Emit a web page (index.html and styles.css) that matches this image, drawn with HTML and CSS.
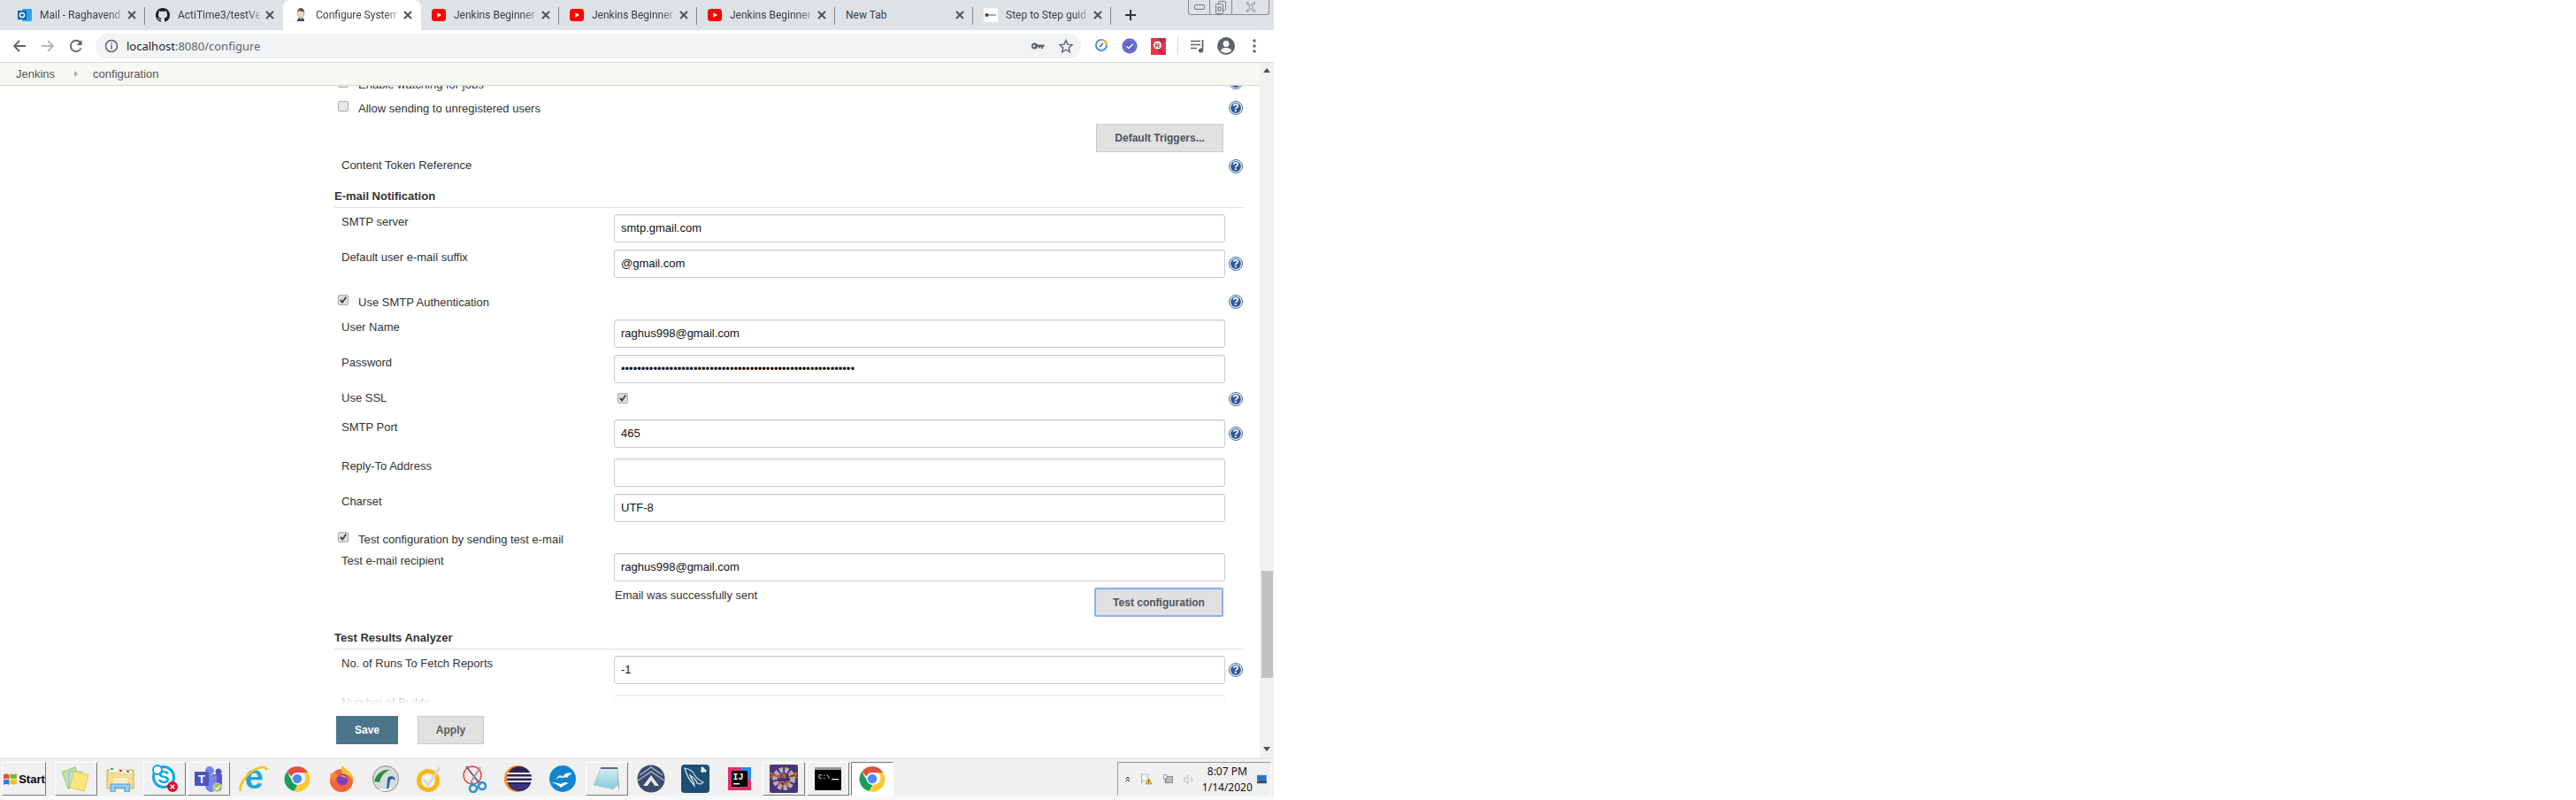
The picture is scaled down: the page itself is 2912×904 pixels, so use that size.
FILE: index.html
```html
<!DOCTYPE html>
<html lang="en">
<head>
  <meta charset="UTF-8" />
  <title>Configure System [Jenkins]</title>
  <link rel="stylesheet" href="styles.css">
</head>
<body>

  <svg class="defs" width="0" height="0">
    <defs>
      <linearGradient id="pad" x1="0" y1="0" x2="0" y2="1">
        <stop offset="0" stop-color="#d8eef3" />
        <stop offset="1" stop-color="#7cc6d6" />
      </linearGradient>
    </defs>
    <symbol id="help" viewBox="0 0 16 16">
      <circle cx="8" cy="8" r="7.500" fill="#fff" stroke="#3a68a8" />
      <circle cx="8" cy="8" r="5.900" fill="#2f5a96" />
      <text x="8" y="12.200" text-anchor="middle" font-family="Liberation Sans" font-weight="700" font-size="12" fill="#fff">?</text>
    </symbol>
    <symbol id="yt" viewBox="0 0 16 16">
      <rect x="0" y="1" width="16" height="14" rx="3.500" fill="#f00" />
      <path d="M6.300 5.300v5.400L11 8z" fill="#fff" />
    </symbol>
    <symbol id="close" viewBox="0 0 16 16">
      <path d="M4 4l8 8M12 4l-8 8" stroke="#4a4d52" stroke-width="1.800" fill="none" />
    </symbol>
    <symbol id="chrome" viewBox="0 0 32 32">
      <path d="M16 1a15 15 0 0 1 13 7.500H16a7.500 7.500 0 0 0-7 4.800L3.500 7.500A15 15 0 0 1 16 1z" fill="#dd5044" />
      <path d="M3.500 7.500L9.800 18.500a7.500 7.500 0 0 0 6.800 4.900L12 31A15 15 0 0 1 3.500 7.500z" fill="#1b9e58" />
      <path d="M29 8.500A15 15 0 0 1 12 31l6.500-8.500a7.500 7.500 0 0 0 3.800-14z" fill="#fdc931" />
      <circle cx="16" cy="16" r="6.900" fill="#fff" />
      <circle cx="16" cy="16" r="5.600" fill="#4d8cf5" />
    </symbol>
  </svg>

  <div class="tabstrip">
    <div class="tab sep">
      <svg class="favicon" viewBox="0 0 16 16"><rect x="5" y="1" width="11" height="14" rx="1" fill="#28a8ea" /><rect x="0" y="3" width="10" height="10" fill="#0a5fb4" /><circle cx="5" cy="8" r="2.600" fill="none" stroke="#fff" stroke-width="1.500" /></svg>
      <span class="tab-title">Mail - Raghavend</span>
      <svg class="tab-close"><use href="#close" /></svg>
    </div>
    <div class="tab">
      <svg class="favicon" viewBox="0 0 16 16"><path fill="#1b1f23" d="M8 0C3.580 0 0 3.580 0 8c0 3.540 2.290 6.530 5.470 7.590.4.070.55-.17.55-.38 0-.19-.01-.82-.01-1.490-2.010.37-2.530-.49-2.690-.94-.09-.23-.48-.94-.82-1.130-.28-.15-.68-.52-.01-.53.63-.01 1.080.58 1.230.82.720 1.210 1.870.87 2.330.66.070-.52.280-.87.510-1.070-1.780-.2-3.640-.89-3.640-3.950 0-.87.310-1.590.820-2.150-.08-.2-.36-1.020.08-2.120 0 0 .67-.21 2.200.82.640-.18 1.320-.27 2-.27s1.360.09 2 .27c1.530-1.040 2.200-.82 2.200-.82.440 1.100.16 1.920.08 2.120.51.560.82 1.270.82 2.150 0 3.070-1.870 3.750-3.650 3.950.29.250.54.730.54 1.480 0 1.070-.01 1.930-.01 2.200 0 .21.150.46.550.38A8.010 8.010 0 0 0 16 8c0-4.420-3.580-8-8-8z" /></svg>
      <span class="tab-title">ActiTime3/testVe</span>
      <svg class="tab-close"><use href="#close" /></svg>
    </div>
    <div class="tab active">
      <svg class="favicon" viewBox="0 0 16 16">
        <path d="M4 15c0-3 1-4 4-4s4 1 4 4z" fill="#3d4a5c" />
        <path d="M6.500 11l1.500 2 1.500-2z" fill="#fff" />
        <path d="M7.200 12.200h1.600l-.8 1z" fill="#c03a30" />
        <path d="M4.500 5c0-3 1.500-4.500 3.700-4.500S12 2.500 11.800 6c-.2 3-1.500 5.200-3.600 5.200C6 11.200 4.500 8.500 4.500 5z" fill="#f0d6b7" stroke="#7a5c46" stroke-width=".5" />
        <path d="M4.500 5C4 2 6 .3 8.200.3S12 2 11.800 4.500C10 4 7 3.500 6 3z" fill="#5c5149" />
      </svg>
      <span class="tab-title">Configure System</span>
      <svg class="tab-close"><use href="#close" /></svg>
    </div>
    <div class="tab sep">
      <svg class="favicon"><use href="#yt" /></svg>
      <span class="tab-title">Jenkins Beginner</span>
      <svg class="tab-close"><use href="#close" /></svg>
    </div>
    <div class="tab sep">
      <svg class="favicon"><use href="#yt" /></svg>
      <span class="tab-title">Jenkins Beginner</span>
      <svg class="tab-close"><use href="#close" /></svg>
    </div>
    <div class="tab sep">
      <svg class="favicon"><use href="#yt" /></svg>
      <span class="tab-title">Jenkins Beginner</span>
      <svg class="tab-close"><use href="#close" /></svg>
    </div>
    <div class="tab sep newtab">
      <span class="tab-title">New Tab</span>
      <svg class="tab-close"><use href="#close" /></svg>
    </div>
    <div class="tab sep">
      <svg class="favicon" viewBox="0 0 16 16"><rect width="16" height="16" fill="#fff" /><circle cx="3.500" cy="8" r="2" fill="#7a2a2a" /><rect x="5" y="7.500" width="9" height="1" fill="#555" /></svg>
      <span class="tab-title">Step to Step guid</span>
      <svg class="tab-close"><use href="#close" /></svg>
    </div>
    <svg class="newtab-plus" viewBox="0 0 16 16"><path d="M8 2v12M2 8h12" stroke="#333" stroke-width="2" /></svg>
    <div class="winctl">
      <span class="win-btn min"><svg width="12" height="6" viewBox="0 0 12 6"><rect x=".5" y=".5" width="11" height="5" rx="1.500" fill="none" stroke="#777" /></svg></span>
      <span class="win-btn max"><svg width="12" height="15" viewBox="0 0 12 15"><rect x="3.500" y=".5" width="8" height="10" rx="1" fill="#dee1e6" stroke="#777" /><rect x=".5" y="3.500" width="8" height="11" rx="1" fill="#dee1e6" stroke="#777" /><rect x="3" y="7" width="3" height="4" fill="none" stroke="#777" /></svg></span>
      <span class="win-btn cls"><svg width="12" height="12" viewBox="0 0 12 12"><path d="M1 1h2l3 3.500L9 1h2L7.200 6 11 11H9L6 7.500 3 11H1l3.800-5z" fill="#eee" stroke="#777" stroke-width=".8" /></svg></span>
    </div>
  </div>

  <div class="toolbar">
    <span class="tool"><svg width="16" height="16" viewBox="0 0 16 16"><path d="M15 8H2.500M8 2L2 8l6 6" stroke="#5f6368" stroke-width="1.800" fill="none" /></svg></span>
    <span class="tool"><svg width="16" height="16" viewBox="0 0 16 16"><path d="M1 8h12.500M8 2l6 6-6 6" stroke="#b4b6b9" stroke-width="1.800" fill="none" /></svg></span>
    <span class="tool"><svg width="16" height="16" viewBox="0 0 16 16"><path d="M13.700 10.500A6.200 6.200 0 1 1 12.500 3.600" stroke="#5f6368" stroke-width="1.800" fill="none" /><path d="M14.500 1v6h-6z" fill="#5f6368" /></svg></span>
    <div class="omnibox">
      <svg class="omni-info" viewBox="0 0 16 16"><circle cx="8" cy="8" r="6.500" fill="none" stroke="#5f6368" stroke-width="1.500" /><path d="M8 7v4.500M8 4.200v1.500" stroke="#5f6368" stroke-width="1.500" /></svg>
      <span class="url"><b>localhost</b>:8080/configure</span>
      <svg class="omni-key" viewBox="0 0 16 16"><circle cx="4.500" cy="8" r="3.500" fill="#5f6368" /><circle cx="4" cy="8" r="1.200" fill="#f1f3f4" /><path d="M7 6.500h8.500v2.500h-1.500v2h-1.800V9h-1v1.500H9.200V9H7z" fill="#5f6368" /></svg>
      <svg class="omni-star" viewBox="0 0 16 16"><path d="M8 1.500l2 4.600 5 .5-3.800 3.300 1.100 4.900L8 12.200l-4.300 2.600 1.100-4.900L1 6.600l5-.5z" fill="none" stroke="#5f6368" stroke-width="1.400" /></svg>
    </div>
    <span class="ext"><svg width="16" height="20" viewBox="0 0 16 20"><circle cx="8" cy="9" r="6" fill="#fff" stroke="#4a90d9" stroke-width="2" /><path d="M8 3a6 6 0 0 1 6 6" stroke="#f2b632" stroke-width="2" fill="none" /><path d="M6 11l4-4" stroke="#555" stroke-width="1.500" /><path d="M5 16h6" stroke="#bcd" /></svg></span>
    <span class="ext"><svg width="18" height="18" viewBox="0 0 18 18"><circle cx="9" cy="9" r="8.500" fill="#5b5fd0" /><circle cx="9" cy="9" r="6.200" fill="none" stroke="#a7a9ea" stroke-dasharray="1.500 1" /><path d="M5.500 9.200l2.500 2.500 4.500-5" fill="none" stroke="#fff" stroke-width="1.600" /></svg></span>
    <span class="ext"><svg width="17" height="20" viewBox="0 0 17 20"><rect y="1" width="17" height="19" fill="#e8344e" /><path d="M17 1H9L3 8l8 12h6l-6-8z" fill="#c52a40" /><circle cx="7.500" cy="9" r="4.500" fill="#fff" /><text x="7.500" y="12" text-anchor="middle" font-family="Liberation Sans" font-weight="700" font-size="8" fill="#c52a40">R</text></svg></span>
    <span class="tool-sep"></span>
    <span class="ext"><svg width="16" height="16" viewBox="0 0 16 16"><path d="M0 2.500h11M0 6.500h11M0 10.500h7" stroke="#5f6368" stroke-width="1.600" /><path d="M13.500 1v11" stroke="#5f6368" stroke-width="1.800" /><circle cx="11.500" cy="13" r="2.600" fill="#5f6368" /></svg></span>
    <span class="ext"><svg width="20" height="20" viewBox="0 0 20 20"><circle cx="10" cy="10" r="10" fill="#5f6368" /><circle cx="10" cy="7.500" r="3.400" fill="#fff" /><path d="M3.800 15.300c1-2.400 3.400-3.400 6.200-3.400s5.200 1 6.200 3.400A8 8 0 0 1 10 18a8 8 0 0 1-6.200-2.700z" fill="#fff" /></svg></span>
    <span class="ext"><svg width="4" height="16" viewBox="0 0 4 16"><circle cx="2" cy="2" r="1.700" fill="#5f6368" /><circle cx="2" cy="8" r="1.700" fill="#5f6368" /><circle cx="2" cy="14" r="1.700" fill="#5f6368" /></svg></span>
  </div>

  <div class="viewport">
    <div class="page">
      <div class="breadcrumbs">
        <a class="crumb">Jenkins</a>
        <svg class="crumb-arrow" width="4" height="7" viewBox="0 0 4 7"><path d="M0 0l4 3.500L0 7z" fill="#aaa" /></svg>
        <a class="crumb">configuration</a>
      </div>

      <div class="scroll">
        <form class="form">
          <div class="row check-row r-enable">
            <label class="check-label"><input type="checkbox" />Enable watching for jobs</label>
            <svg class="help h-top"><use href="#help" /></svg>
          </div>
          <div class="row check-row r-allow">
            <label class="check-label"><input type="checkbox" />Allow sending to unregistered users</label>
            <svg class="help"><use href="#help" /></svg>
          </div>
          <div class="row button-row r-triggers">
            <span></span>
            <button type="button" class="btn btn-triggers">Default Triggers...</button>
          </div>
          <div class="row text-row r-token">
            <span class="field-label">Content Token Reference</span>
            <span></span>
            <svg class="help h-low"><use href="#help" /></svg>
          </div>

          <div class="section-head r-head-mail">E-mail Notification</div>
          <div class="row r-first">
            <span class="field-label">SMTP server</span>
            <input type="text" value="smtp.gmail.com" />
          </div>
          <div class="row">
            <span class="field-label">Default user e-mail suffix</span>
            <input type="text" value="@gmail.com" />
            <svg class="help h-mid"><use href="#help" /></svg>
          </div>
          <div class="row check-row r-auth">
            <label class="check-label"><input type="checkbox" checked />Use SMTP Authentication</label>
            <svg class="help"><use href="#help" /></svg>
          </div>
          <div class="row r-user">
            <span class="field-label">User Name</span>
            <input type="text" value="raghus998@gmail.com" />
          </div>
          <div class="row">
            <span class="field-label">Password</span>
            <input type="password" value="0000000000000000000000000000000000000000000000000000000000" />
          </div>
          <div class="row r-ssl">
            <span class="field-label">Use SSL</span>
            <span class="ssl-box"><input type="checkbox" checked /></span>
            <svg class="help h-ssl"><use href="#help" /></svg>
          </div>
          <div class="row">
            <span class="field-label">SMTP Port</span>
            <input type="text" value="465" />
            <svg class="help h-mid"><use href="#help" /></svg>
          </div>
          <div class="row r-reply">
            <span class="field-label">Reply-To Address</span>
            <input type="text" value="" />
          </div>
          <div class="row">
            <span class="field-label">Charset</span>
            <input type="text" value="UTF-8" />
          </div>
          <div class="row check-row r-test">
            <label class="check-label"><input type="checkbox" checked />Test configuration by sending test e-mail</label>
          </div>
          <div class="row">
            <span class="field-label">Test e-mail recipient</span>
            <input type="text" value="raghus998@gmail.com" />
          </div>
          <div class="row status-row">
            <span></span>
            <div class="status">
              <span class="status-text">Email was successfully sent</span>
              <button type="button" class="btn btn-test">Test configuration</button>
            </div>
          </div>

          <div class="section-head r-head-tra">Test Results Analyzer</div>
          <div class="row r-first">
            <span class="field-label">No. of Runs To Fetch Reports</span>
            <input type="text" value="-1" />
            <svg class="help h-mid"><use href="#help" /></svg>
          </div>
          <div class="row r-reply">
            <span class="field-label">Number of Builds</span>
            <input type="text" value="10" />
          </div>
        </form>
      </div>

      <div class="actions">
        <button type="button" class="btn btn-save">Save</button>
        <button type="button" class="btn btn-apply">Apply</button>
      </div>
    </div>

    <div class="scrollbar">
      <span class="sb-arrow up"></span>
      <span class="sb-thumb"></span>
      <span class="sb-arrow down"></span>
    </div>
  </div>

  <div class="taskbar">
    <button class="start">
      <svg width="17" height="15" viewBox="0 0 16 14"><path d="M1 2c2-1 4-1 6 0v5C5 6 3 6 1 7z" fill="#e2502a" /><path d="M8 1c2 1 5 1 7 0v5c-2 1-5 1-7 0z" fill="#7cb82f" /><path d="M1 8c2-1 4-1 6 0v5c-2-1-4-1-6 0z" fill="#2d7dd2" /><path d="M8 7c2 1 5 1 7 0v5c-2 1-5 1-7 0z" fill="#f5bd1f" /></svg>
      <span>Start</span>
    </button>
    <div class="task-icons">
      <span class="task raised">
        <svg width="32" height="30" viewBox="0 0 32 30"><rect x="3" y="4" width="16" height="20" fill="#bde3a5" stroke="#98c884" transform="rotate(-20 11 14)" /><rect x="8" y="7" width="15" height="18" fill="#bcdcf3" stroke="#94bedb" /><rect x="11" y="8" width="17" height="19" fill="#fbe67c" stroke="#e0c85c" transform="rotate(14 19 17)" /></svg>
      </span>
      <span class="task">
        <svg width="32" height="30" viewBox="0 0 32 30"><path d="M1 5h30v21H1z" fill="#f6dc92" stroke="#c8a85c" /><rect x="4" y="3" width="9" height="4" fill="#fff" /><rect x="5" y="3" width="3" height="2" fill="#22a83c" /><rect x="14" y="5" width="8" height="3" fill="#fff" /><rect x="15" y="5" width="3" height="2" fill="#d33" /><rect x="22" y="6" width="7" height="3" fill="#fff" /><rect x="23" y="6" width="3" height="2" fill="#38c" /><path d="M8 14h16v7H8z" fill="#fbeec4" /><path d="M5 21h22l-1 9h-5v-5H10v5H5z" fill="#8fd0ef" stroke="#4c94c8" /></svg>
      </span>
      <span class="task raised">
        <svg width="32" height="32" viewBox="0 0 32 32"><circle cx="15" cy="14" r="11.500" fill="#fff" stroke="#12a5e6" stroke-width="3" /><circle cx="8" cy="6" r="5" fill="#fff" stroke="#12a5e6" stroke-width="2" /><text x="15" y="21" text-anchor="middle" font-family="Liberation Sans" font-weight="700" font-size="20" fill="#12a5e6">S</text><circle cx="25" cy="25" r="6" fill="#e3092a" /><path d="M22.800 22.800l4.400 4.400M27.200 22.800l-4.400 4.400" stroke="#fff" stroke-width="1.500" /></svg>
      </span>
      <span class="task raised">
        <svg width="32" height="30" viewBox="0 0 32 30"><circle cx="17" cy="6" r="5" fill="#7b83eb" /><circle cx="27" cy="7" r="3.500" fill="#4e57c0" /><path d="M20 10h11v10a5 5 0 0 1-5 5h-6z" fill="#5059c9" /><path d="M12 11h13v13a6 6 0 0 1-6 6 7 7 0 0 1-7-6z" fill="#7b83eb" /><rect x="0" y="7" width="16" height="16" rx="1" fill="#4b53bc" /><text x="8" y="20" text-anchor="middle" font-family="Liberation Sans" font-weight="700" font-size="13" fill="#fff">T</text><circle cx="26" cy="25" r="5" fill="#9ac25a" stroke="#ddd" /><path d="M23.500 25l2 2 3-4" stroke="#fff" stroke-width="1.500" fill="none" /></svg>
      </span>
      <span class="task">
        <svg width="32" height="32" viewBox="0 0 32 32"><text x="17" y="27" text-anchor="middle" font-family="Liberation Sans" font-weight="700" font-size="38" fill="#21a5dd">e</text><path d="M2 30C0 26 6 10 22 4c5-2 9-1 9 2" fill="none" stroke="#f5c518" stroke-width="2.500" /></svg>
      </span>
      <span class="task"><svg width="30" height="30"><use href="#chrome" /></svg></span>
      <span class="task">
        <svg width="32" height="32" viewBox="0 0 32 32"><circle cx="16" cy="18" r="13" fill="#f5633c" /><path d="M16 1c3 4 13 6 14 18-4-6-8-9-14-9z" fill="#fdbf2e" /><path d="M3 10c2 1 4 0 6-2 0 3 2 4 6 4l-9 8z" fill="#f9872e" /><circle cx="17" cy="17" r="6.500" fill="#7b3fc1" /><path d="M13 13c3-2 8-1 10 3-3-2-6-2-10-3z" fill="#fd9d2c" /></svg>
      </span>
      <span class="task">
        <svg width="30" height="30" viewBox="0 0 30 30"><circle cx="15" cy="15" r="14.500" fill="#d7dcdc" stroke="#888" /><path d="M2 18C5 8 13 4 20 5c-6 2-10 6-12 14z" fill="#2c8a3e" /><path d="M18 13c4-2 8 0 8 4-2-2-4-2-6-1l-2 12h-2l1-12z" fill="#1e5ea8" /><path d="M8 27c4 1 10 1 14-2" fill="none" stroke="#fff" stroke-width="2" /></svg>
      </span>
      <span class="task">
        <svg width="32" height="32" viewBox="0 0 32 32"><circle cx="14" cy="18" r="10.500" fill="#f3f3f3" stroke="#f7b917" stroke-width="5" /><path d="M9 17l5 6L27 3" fill="none" stroke="#d8d8d8" stroke-width="3" /></svg>
      </span>
      <span class="task">
        <svg width="30" height="32" viewBox="0 0 30 32"><circle cx="13" cy="12" r="10" fill="#fbe7e7" stroke="#e14646" stroke-width="1.500" /><path d="M6 2l14 18" stroke="#667" stroke-width="2" /><path d="M22 3L11 20" stroke="#99a" stroke-width="2" /><circle cx="24" cy="24" r="4" fill="none" stroke="#2b8fcf" stroke-width="2.500" /><circle cx="14" cy="27" r="4" fill="none" stroke="#2b8fcf" stroke-width="2.500" /><path d="M20 20l3 2M12 20l2 4" stroke="#2b8fcf" stroke-width="2.500" /></svg>
      </span>
      <span class="task">
        <svg width="32" height="30" viewBox="0 0 32 30"><circle cx="15" cy="15" r="15" fill="#f78c1e" /><circle cx="17" cy="15" r="14" fill="#2c2255" /><path d="M3 9h28M3 13.500h28M3 18h28" stroke="#f4f2fa" stroke-width="2" /><path d="M5 21h24a14 14 0 0 1-24 0z" fill="#3d3487" /></svg>
      </span>
      <span class="task">
        <svg width="30" height="30" viewBox="0 0 30 30"><circle cx="15" cy="15" r="15" fill="#0e85cd" /><path d="M7 16c3-5 6-6 8-3 2-4 6-6 11-4-3 1-5 3-6 5-2-1-3-1-5 0-2-1-5-1-8 2z" fill="#fff" /><path d="M2 19c5 0 8 1 11 2 3-2 6-2 9-1-4 1-6 3-9 5-3-3-7-5-11-6z" fill="#fff" /></svg>
      </span>
      <span class="task raised">
        <svg width="32" height="30" viewBox="0 0 32 30"><path d="M28 2l2 24-3 2z" fill="#a47f3c" /><path d="M9 3h19l1 25L1 22z" fill="url(#pad)" stroke="#8cb8c4" stroke-width=".5" /><path d="M9 2h19v2H9z" fill="#667" /><path d="M22 28l7-6v6z" fill="#f4f4f4" /></svg>
      </span>
      <span class="task">
        <svg width="32" height="32" viewBox="0 0 32 32"><circle cx="16" cy="16" r="15.500" fill="#3c4a6e" /><path d="M3 12l13-9 13 9M1 18l15-10 15 10" fill="none" stroke="#9fb2cc" stroke-width="1.500" /><path d="M7 24l9-12 9 12h-5l-4-6-4 6z" fill="#e8e8ea" /></svg>
      </span>
      <span class="task">
        <svg width="32" height="32" viewBox="0 0 32 32"><rect width="32" height="32" rx="4" fill="#1d4e75" /><path d="M4 4c6 1 10 4 12 9 2 3 5 5 9 7l-3 2-4-1c-1-4-4-6-8-9 2 5 5 8 5 12-3-4-8-8-11-20z" fill="none" stroke="#d8e6ef" stroke-width="1.200" /><path d="M23 3l5 5" stroke="#e6eef3" stroke-width="2.500" /><circle cx="24" cy="7" r="2" fill="#e6eef3" /></svg>
      </span>
      <span class="task">
        <svg width="26" height="26" viewBox="0 0 26 26"><rect width="26" height="26" fill="#e52d6f" /><path d="M13 0h13v16z" fill="#2a8ef0" /><rect x="4" y="4" width="18" height="18" fill="#000" /><text x="5.500" y="14" font-family="Liberation Mono" font-weight="700" font-size="10" fill="#fff">IJ</text><rect x="6" y="18" width="7" height="1.500" fill="#fff" /></svg>
      </span>
      <span class="task raised">
        <svg width="32" height="32" viewBox="0 0 32 32"><rect width="32" height="32" rx="2" fill="#4a3478" /><circle cx="16" cy="16" r="10" fill="none" stroke="#b4b0b4" stroke-width="6" stroke-dasharray="4 2" /><text x="16" y="15" text-anchor="middle" font-family="Liberation Sans" font-size="9.500" fill="#f58a1f">Java EE</text><text x="16" y="25" text-anchor="middle" font-family="Liberation Sans" font-size="9.500" fill="#f58a1f">IDE</text></svg>
      </span>
      <span class="task raised">
        <svg width="30" height="26" viewBox="0 0 30 26"><rect width="30" height="26" rx="1" fill="#000" /><rect width="30" height="3" fill="#999" /><text x="4" y="13" font-family="Liberation Mono" font-size="7.500" fill="#fff">C:\</text><rect x="19" y="13" width="8" height="1.200" fill="#fff" /></svg>
      </span>
      <span class="task pressed"><svg width="30" height="30"><use href="#chrome" /></svg></span>
    </div>
    <div class="tray">
      <svg width="8" height="9" viewBox="0 0 8 9"><path d="M1 4l3-3 3 3M1 8l3-3 3 3" fill="none" stroke="#000" stroke-width="1.300" /></svg>
      <svg class="tray-flag" width="18" height="17" viewBox="0 0 18 17"><path d="M1 0v16" stroke="#888" /><path d="M1 1h11l-2 5 3 5H1z" fill="#f4f4f4" stroke="#aaa" /><path d="M12 7l5 9H7z" fill="#f3d21f" stroke="#a58c10" /><path d="M12 10v3M12 14v1" stroke="#000" /></svg>
      <svg class="tray-net" width="16" height="16" viewBox="0 0 16 16"><rect x="4" y="3" width="11" height="10" fill="#bbb" stroke="#777" /><rect x="0.500" y="0.500" width="5" height="6" fill="#fff" stroke="#777" /><path d="M3 7v6h5" stroke="#777" fill="none" /></svg>
      <svg class="tray-vol" width="16" height="16" viewBox="0 0 16 16"><path d="M1 5h2l4-4v14l-4-4H1z" fill="#eee" stroke="#aaa" /><path d="M10 5a4 4 0 0 1 0 6M12 3a7 7 0 0 1 0 10" fill="none" stroke="#bbb" /></svg>
      <div class="clock"><span>8:07 PM</span><span>1/14/2020</span></div>
      <svg class="tray-desk" width="15" height="13" viewBox="0 0 15 13"><rect width="15" height="13" fill="#2a77c4" /><rect y="9" width="15" height="4" fill="#3b4a5a" /><rect x="1" y="9" width="2" height="1" fill="#fc3" /></svg>
    </div>
  </div>

</body>
</html>
```

FILE: styles.css
```css
* {
  box-sizing: border-box;
}
body {
  margin: 0;
  width: 1440px;
  height: 904px;
  font-family: "Liberation Sans", Arial, sans-serif;
  font-size: 13px;
  color: #333;
  background: #fff;
  overflow: hidden;
}
.defs {
  display: block;
  height: 0;
}

/* chrome tabs */
.tabstrip {
  display: flex;
  height: 34px;
  padding-left: 8px;
  background: #dee1e6;
}
.tab {
  display: flex;
  align-items: center;
  width: 156px;
  height: 34px;
  padding-left: 12px;
  position: relative;
  font-family: Roboto, sans-serif;
  font-size: 12px;
  color: #3c4043;
}
.tab.sep::after {
  content: "";
  position: absolute;
  right: 0;
  top: 8px;
  height: 20px;
  border-right: 1px solid #80868b;
}
.tab.active {
  background: #fff;
  border-radius: 8px 8px 0 0;
}
.favicon {
  width: 16px;
  height: 16px;
  flex: none;
  margin-right: 9px;
}
.tab-title {
  flex: 1;
  overflow: hidden;
  white-space: nowrap;
  -webkit-mask-image: linear-gradient(to right, #000 85%, rgba(0, 0, 0, .3));
  mask-image: linear-gradient(to right, #000 85%, rgba(0, 0, 0, .3));
}
.newtab .tab-title {
  -webkit-mask-image: none;
  mask-image: none;
}
.tab-close {
  width: 16px;
  height: 16px;
  flex: none;
  margin: 0 7px 0 4px;
}
.newtab-plus {
  width: 16px;
  height: 16px;
  margin: 9px 0 0 14px;
}
.winctl {
  display: flex;
  height: 17px;
  margin: 0 5px 0 auto;
  border: 1px solid #8a8a8a;
  border-top: 0;
  border-radius: 0 0 3px 3px;
}
.win-btn {
  display: flex;
  align-items: center;
  justify-content: center;
  border-right: 1px solid #8a8a8a;
}
.win-btn.min {
  width: 24px;
}
.win-btn.max {
  width: 25px;
}
.win-btn.cls {
  width: 41px;
  border-right: 0;
}

/* address bar */
.toolbar {
  display: flex;
  align-items: center;
  height: 37px;
  padding: 0 6px 1px;
  background: #fff;
  border-bottom: 1px solid #d3d5d8;
}
.tool {
  display: flex;
  justify-content: center;
  width: 32px;
}
.omnibox {
  display: flex;
  align-items: center;
  width: 1114px;
  height: 28px;
  margin: 0 7px 0 6px;
  padding: 0 9px 0 10px;
  background: #f1f3f4;
  border-radius: 14px;
}
.omni-info {
  width: 16px;
  height: 16px;
}
.url {
  margin-left: 9px;
  font-family: "Noto Sans", sans-serif;
  font-size: 13px;
  color: #5f6368;
}
.url b {
  font-weight: 400;
  color: #202124;
}
.omni-key {
  width: 16px;
  height: 16px;
  margin-left: auto;
}
.omni-star {
  width: 16px;
  height: 16px;
  margin-left: 16px;
}
.ext {
  display: flex;
  justify-content: center;
  width: 32px;
}
.tool-sep {
  height: 20px;
  margin: 0 6px;
  border-left: 1px solid #d3d5d8;
}

/* jenkins page */
.viewport {
  display: flex;
  height: 785px;
}
.page {
  display: flex;
  flex-direction: column;
  flex: 1;
  min-width: 0;
}
.breadcrumbs {
  display: flex;
  align-items: center;
  height: 26px;
  flex: none;
  padding-left: 18px;
  background: #f6f8f2;
  border-bottom: 1px solid #d3d7cf;
  color: #555;
}
.crumb-arrow {
  margin: 0 17px 0 22px;
}
.scroll {
  flex: 1;
  position: relative;
  overflow: hidden;
}
.scroll::after {
  content: "";
  position: absolute;
  left: 0;
  right: 0;
  bottom: 0;
  height: 13px;
  background: linear-gradient(to bottom, rgba(255, 255, 255, .5), #fff);
}
.form {
  width: 1027px;
  margin: -10px 0 0 378px;
}
.row {
  display: grid;
  grid-template-columns: 316px 691px 20px;
  height: 32px;
  margin-top: 8px;
}
.check-row,
.text-row {
  height: 16px;
}
.r-enable {
  margin-top: 0;
}
.r-enable input {
  margin-top: -2px;
}
.r-allow {
  margin-top: 11px;
}
.r-triggers {
  margin-top: 10px;
}
.r-token {
  margin-top: 6px;
}
.r-first {
  margin-top: 7px;
}
.r-auth {
  margin-top: 19px;
}
.r-user,
.r-reply {
  margin-top: 12px;
}
.r-ssl {
  height: 25px;
}
.r-test {
  margin-top: 11px;
}
.status-row {
  height: 33px;
  margin-top: 7px;
}
.field-label {
  padding: 1px 0 0 8px;
  line-height: 16px;
}
.check-label {
  display: flex;
  align-items: flex-start;
  grid-column: 1 / 3;
  padding-left: 4px;
  line-height: 17px;
}
.check-label input {
  flex: none;
}
input[type="checkbox"] {
  appearance: none;
  position: relative;
  width: 12px;
  height: 12px;
  margin: 0 11px 0 0;
  background: #e8e8e8;
  border: 1px solid #aaa;
  border-radius: 2px;
}
input[type="checkbox"]:checked {
  background: #ddd;
}
input[type="checkbox"]:checked::after {
  content: "";
  position: absolute;
  left: 1px;
  top: 1px;
  width: 8px;
  height: 8px;
  background: #444;
  clip-path: polygon(0 55%, 25% 40%, 38% 62%, 82% 0, 100% 12%, 40% 100%);
}
.ssl-box {
  padding: 3px 0 0 4px;
}
.row input[type="text"],
.row input[type="password"] {
  width: 691px;
  height: 32px;
  padding: 0 7px 1px;
  font-family: "Liberation Sans", sans-serif;
  font-size: 13px;
  color: #111;
  background: #fff;
  border: 1px solid #ccc;
  border-radius: 3px;
  box-shadow: inset 0 1px 1px #eee;
}
.help {
  grid-column: 3;
  width: 16px;
  height: 16px;
  margin-left: 4px;
}
.h-top {
  margin-top: -2px;
}
.h-low {
  margin-top: 2px;
}
.h-mid {
  margin-top: 8px;
}
.h-ssl {
  margin-top: 2px;
}
.section-head {
  height: 22px;
  padding-top: 1px;
  line-height: 16px;
  font-weight: 700;
  border-bottom: 1px solid #ddd;
}
.r-head-mail {
  margin-top: 19px;
}
.r-head-tra {
  margin-top: 15px;
}
.status {
  display: flex;
  justify-content: space-between;
  padding: 1px 2px 0 1px;
}
.btn {
  font-family: "Liberation Sans", sans-serif;
  font-size: 12px;
  font-weight: 700;
  color: #4d545d;
  background: #e0e0e0;
  border: 1px solid #ccc;
  border-radius: 0;
  padding: 0;
}
.button-row .btn {
  justify-self: end;
  width: 144px;
  height: 32px;
  margin-right: 2px;
}
.btn-test {
  width: 146px;
  height: 33px;
  margin-top: -1px;
  border: 2px solid #8ab0ee;
  border-radius: 2px;
}
.actions {
  display: flex;
  flex: none;
  height: 60px;
  padding: 13px 0 0 380px;
}
.btn-save {
  width: 70px;
  height: 32px;
  color: #fff;
  background: #4b758b;
  border-color: #4b758b;
}
.btn-apply {
  width: 75px;
  height: 32px;
  margin-left: 22px;
  color: #5a5a5a;
}

/* page scrollbar */
.scrollbar {
  display: flex;
  flex-direction: column;
  align-items: center;
  width: 16px;
  background: #f1f1f1;
}
.sb-arrow {
  width: 0;
  height: 0;
  border-left: 4px solid transparent;
  border-right: 4px solid transparent;
}
.sb-arrow.up {
  margin-top: 6px;
  border-bottom: 5px solid #505050;
}
.sb-thumb {
  width: 13px;
  height: 121px;
  margin-top: 563px;
  background: #c1c1c1;
}
.sb-arrow.down {
  margin-top: 78px;
  border-top: 5px solid #505050;
}

/* windows taskbar */
.taskbar {
  display: flex;
  height: 48px;
  padding: 3px 3px 0 2px;
  background: #f0f0f0;
  border-top: 2px solid #e4e9f0;
  border-bottom: 5px solid #f6f8fb;
}
.start {
  display: flex;
  align-items: center;
  justify-content: center;
  gap: 1px;
  width: 50px;
  height: 38px;
  padding: 0;
  font-family: "Liberation Sans", sans-serif;
  font-size: 13px;
  font-weight: 700;
  color: #000;
  background: #f0f0f0;
  border: 1px solid;
  border-color: #fff #777 #777 #fff;
  border-radius: 0;
}
.task-icons {
  display: flex;
  gap: 2px;
  margin-left: 10px;
}
.task {
  display: flex;
  align-items: center;
  justify-content: center;
  width: 48px;
  height: 38px;
  border: 1px solid transparent;
}
.task.raised {
  border-color: #fff #777 #777 #fff;
}
.task.pressed {
  background: #fff;
  border-color: #777 #fff #fff #777;
}
.tray {
  display: flex;
  align-items: center;
  width: 174px;
  height: 38px;
  margin-left: auto;
  padding: 0 4px 0 8px;
  border: 1px solid;
  border-color: #999 #fff #fff #999;
  border-bottom: 0;
  color: #111;
}
.tray-flag {
  margin-left: 12px;
}
.tray-net {
  margin-left: 12px;
}
.tray-vol {
  margin-left: 12px;
}
.clock {
  display: flex;
  flex-direction: column;
  align-items: center;
  width: 56px;
  margin-left: 10px;
  font-family: "Noto Sans", sans-serif;
  font-size: 12px;
  line-height: 18px;
}
.tray-desk {
  margin-left: 6px;
}
```
